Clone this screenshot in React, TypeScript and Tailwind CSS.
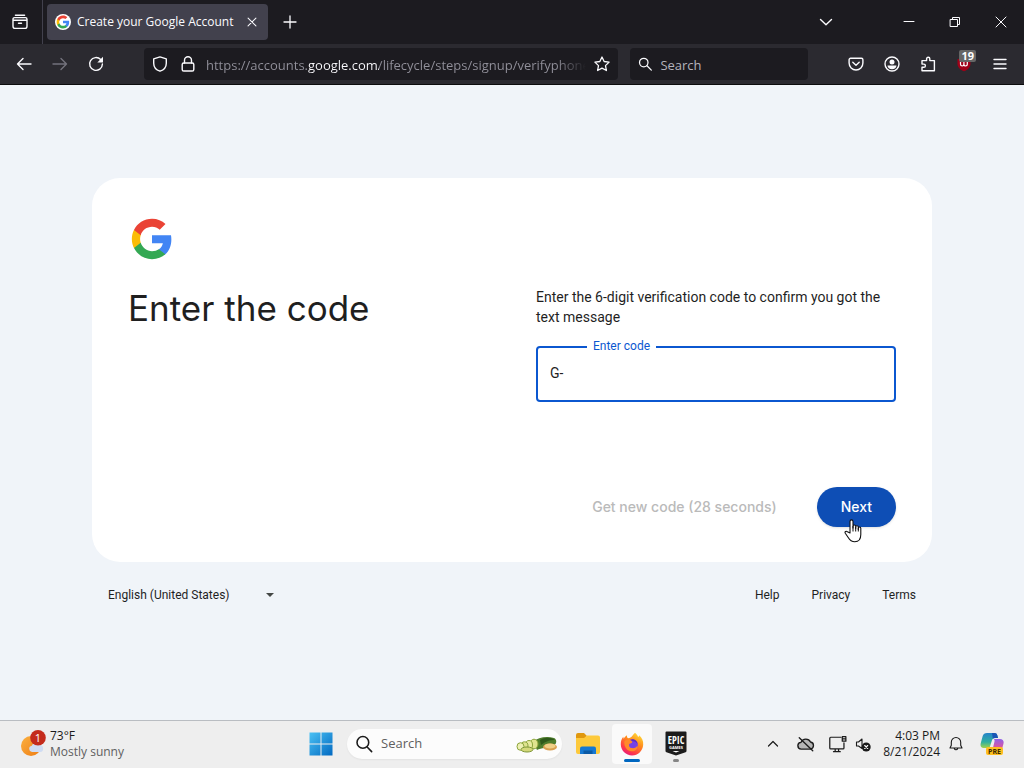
import type { ReactNode } from "react";

const CHROME_FONT = "font-['Open_Sans','Noto_Sans',sans-serif]";
const PAGE_FONT = "font-['Roboto','Inter',sans-serif]";
const DISPLAY_FONT = "font-['Inter','Roboto',sans-serif]";

function GoogleLogo({ className }: { className?: string }) {
  return (
    <svg viewBox="0 0 48 48" className={className} aria-hidden="true">
      <path fill="#4285F4" d="M45.12 24.5c0-1.56-.14-3.06-.4-4.5H24v8.51h11.84c-.51 2.75-2.06 5.08-4.39 6.64v5.52h7.11c4.16-3.83 6.56-9.47 6.56-16.17z" />
      <path fill="#34A853" d="M24 46c5.94 0 10.92-1.97 14.56-5.33l-7.11-5.52c-1.97 1.32-4.49 2.1-7.45 2.1-5.73 0-10.58-3.87-12.31-9.07H4.34v5.7C7.96 41.07 15.4 46 24 46z" />
      <path fill="#FBBC05" d="M11.69 28.18C11.25 26.86 11 25.45 11 24s.25-2.86.69-4.18v-5.7H4.34C2.85 17.09 2 20.45 2 24c0 3.55.85 6.91 2.34 9.88l7.35-5.7z" />
      <path fill="#EA4335" d="M24 10.75c3.23 0 6.13 1.11 8.41 3.29l6.31-6.31C34.91 4.18 29.93 2 24 2 15.4 2 7.96 6.93 4.34 14.12l7.35 5.7c1.73-5.2 6.58-9.07 12.31-9.07z" />
    </svg>
  );
}

function Glyph({ children, className = "size-4", width = 1.4 }: { children: ReactNode; className?: string; width?: number }) {
  return (
    <svg
      viewBox="0 0 16 16"
      className={className}
      fill="none"
      stroke="currentColor"
      strokeWidth={width}
      strokeLinecap="round"
      strokeLinejoin="round"
      aria-hidden="true"
    >
      {children}
    </svg>
  );
}

function ToolButton({ label, children, className = "text-[#fbfbfe]" }: { label: string; children: ReactNode; className?: string }) {
  return (
    <button type="button" aria-label={label} className={`flex h-8 w-9 shrink-0 items-center justify-center ${className}`}>
      {children}
    </button>
  );
}

function WindowButton({ label, children }: { label: string; children: ReactNode }) {
  return (
    <button type="button" aria-label={label} className="flex h-11 w-[46px] items-center justify-center text-[#fbfbfe]">
      {children}
    </button>
  );
}

function TabStrip() {
  return (
    <div className="flex h-11 items-center bg-[#1c1b20]">
      <div className="flex h-11 w-[43px] shrink-0 items-center justify-center border-r border-[#42414d] pr-0.5">
        <button type="button" aria-label="Recent browsing" className="text-[#fbfbfe]">
          <Glyph>
            <path d="M3.4 1.200h9.200M2.600 3.600h10.800a1.600 1.600 0 0 1 1.600 1.600v7a2.200 2.200 0 0 1-2.200 2.200H3.200A2.200 2.200 0 0 1 1 12.200v-7a1.600 1.600 0 0 1 1.600-1.600zM1.200 6.200h13.600M6.500 9.300h3" />
          </Glyph>
        </button>
      </div>
      <div className="ml-1 flex h-9 w-[221px] items-center rounded bg-[#42414d] px-2 text-[#fbfbfe]">
        <span className="flex size-4 shrink-0 items-center justify-center rounded-full bg-white">
          <GoogleLogo className="size-3.5" />
        </span>
        <span className="ml-1.5 grow truncate text-xs">Create your Google Account</span>
        <button type="button" aria-label="Close tab" className="flex size-4 items-center justify-center">
          <Glyph className="size-3.5" width={1.2}><path d="M3.500 3.500l9 9M12.500 3.500l-9 9" /></Glyph>
        </button>
      </div>
      <button type="button" aria-label="New tab" className="ml-1 flex size-9 items-center justify-center text-[#fbfbfe]">
        <Glyph width={1.3}><path d="M8 2v12M2 8h12" /></Glyph>
      </button>
      <div className="grow" />
      <button type="button" aria-label="List all tabs" className="mr-[42px] flex size-9 items-center justify-center text-[#fbfbfe]">
        <Glyph><path d="M2.500 5.500L8 10.700l5.500-5.200" /></Glyph>
      </button>
      <WindowButton label="Minimize">
        <Glyph width={1}><path d="M3 7.500h10" /></Glyph>
      </WindowButton>
      <WindowButton label="Restore">
        <Glyph width={1}><path strokeLinejoin="miter" d="M3.500 5.500h7v7h-7zM5.500 5.500v-2h7v7h-2" /></Glyph>
      </WindowButton>
      <WindowButton label="Close">
        <Glyph width={1}><path d="M3 3l10 10M13 3L3 13" /></Glyph>
      </WindowButton>
    </div>
  );
}

function NavBar() {
  return (
    <div className="flex h-[41px] items-center border-b border-[#0c0c0d] bg-[#2b2a30] px-1.5">
      <ToolButton label="Back">
        <Glyph><path d="M15 8H1.500M7 2.500L1.500 8 7 13.500" /></Glyph>
      </ToolButton>
      <ToolButton label="Forward" className="text-[#73727c]">
        <Glyph><path d="M1 8h13.500M9 2.500L14.500 8 9 13.500" /></Glyph>
      </ToolButton>
      <ToolButton label="Reload">
        <Glyph>
          <path d="M12.700 3.600A6.400 6.400 0 1 0 14.400 8" />
          <path fill="currentColor" stroke="none" d="M15 .8v5.200a.5.5 0 0 1-.5.5H9.300z" />
        </Glyph>
      </ToolButton>
      <div className="ml-[30px] flex h-8 min-w-0 grow items-center rounded bg-[#1c1b20] text-[#fbfbfe]">
        <button type="button" aria-label="Tracking protection" className="flex w-8 shrink-0 items-center justify-center">
          <Glyph>
            <path d="M8 .9l6.300 2v4.300c0 3.700-2.500 6.700-6.300 8-3.800-1.300-6.300-4.300-6.300-8V2.900z" />
          </Glyph>
        </button>
        <button type="button" aria-label="Site information" className="flex w-6 shrink-0 items-center justify-center">
          <Glyph>
            <rect x="2.200" y="7" width="11.600" height="8" rx="1.600" />
            <path d="M4.500 7V4.300a3.500 3.500 0 0 1 7 0V7" />
          </Glyph>
        </button>
        <input
          type="text"
          aria-label="Address"
          defaultValue="https://accounts.google.com/lifecycle/steps/signup/verifyphone"
          className="ml-1.5 h-8 min-w-0 grow bg-[linear-gradient(90deg,#92919b_102px,#fbfbfe_102px,#fbfbfe_173px,#92919b_173px,#92919b_350px,#1c1b20_380px)] bg-clip-text pt-0.5 text-[13px] text-transparent outline-none"
        />
        <button type="button" aria-label="Bookmark this page" className="flex w-8 shrink-0 items-center justify-center">
          <Glyph width={1.300}>
            <path d="M8 1l2.150 4.500 4.950.65-3.600 3.450.9 4.900L8 12.100l-4.400 2.400.9-4.900L.9 6.150l4.950-.65z" />
          </Glyph>
        </button>
      </div>
      <label className="ml-3 flex h-8 w-[178px] shrink-0 items-center rounded bg-[#1c1b20] pl-2 text-[#fbfbfe]">
        <Glyph>
          <circle cx="6.400" cy="6.400" r="4.700" />
          <path d="M10 10l4.800 4.800" />
        </Glyph>
        <input type="search" aria-label="Search" placeholder="Search" className="ml-2 h-8 min-w-0 grow bg-transparent pt-0.5 text-[13px] outline-none placeholder:text-[#b4b3bc]" />
      </label>
      <div className="ml-[30px] flex shrink-0">
        <ToolButton label="Save to Pocket">
          <Glyph>
            <path d="M2.600 2.200h10.800a1.500 1.500 0 0 1 1.500 1.500v3.400a6.900 6.900 0 0 1-13.800 0V3.700a1.500 1.500 0 0 1 1.500-1.500z" />
            <path d="M4.800 6.300L8 9.300l3.200-3" />
          </Glyph>
        </ToolButton>
        <ToolButton label="Account">
          <Glyph>
            <circle cx="8" cy="8" r="7" />
            <circle cx="8" cy="6" r="2.500" fill="currentColor" stroke="none" />
            <path fill="currentColor" stroke="none" d="M3.500 9.500h9c0 2.200-2 3.800-4.500 3.800s-4.500-1.600-4.500-3.800z" />
          </Glyph>
        </ToolButton>
        <ToolButton label="Extensions">
          <Glyph>
            <path d="M2 14.800V11.300h1.800a1.600 1.600 0 0 0 0-3.200H2V4.600h4.600V2.800a1.600 1.600 0 0 1 3.200 0v1.800h4.600v10.200z" />
          </Glyph>
        </ToolButton>
        <div className="relative">
          <ToolButton label="uBlock Origin">
            <svg viewBox="0 0 16 16" className="size-4" aria-hidden="true">
              <path fill="#a00018" d="M8 1l6.500 2.200v4.500c0 3.600-2.700 6-6.500 7.500-3.800-1.500-6.500-3.900-6.500-7.500V3.200z" />
              <path fill="none" stroke="#fff" strokeWidth="1.200" d="M4.500 6v2.300a1.700 1.700 0 0 0 3.400 0V6v2.300a1.700 1.700 0 0 0 3.400 0V6" />
            </svg>
          </ToolButton>
          <span className="absolute top-0.5 right-1.5 rounded-xs bg-[#666666] px-0.5 text-[11px] leading-3 font-bold text-white">19</span>
        </div>
        <ToolButton label="Open application menu">
          <Glyph><path d="M2 3.500h12M2 8h12M2 12.500h12" /></Glyph>
        </ToolButton>
      </div>
    </div>
  );
}

function HandPointer() {
  return (
    <svg viewBox="0 0 18 24" className="h-6 w-[18px]" aria-hidden="true">
      <path
        fill="#fff"
        stroke="#111"
        strokeWidth="1.100"
        strokeLinejoin="round"
        d="M6 14V2.400a1.500 1.500 0 0 1 3 0V9V7.300a1.300 1.300 0 0 1 2.700 0V9.500V8a1.300 1.300 0 0 1 2.600 0v2.500V9.300a1.250 1.250 0 0 1 2.500 0V15.500c0 4.500-2.300 7.300-6 7.300-3.500 0-5-1.600-6.600-4.300L1.300 14.300c-.9-1.600.9-2.700 2.100-1.500z"
      />
      <path stroke="#111" strokeWidth="1" d="M9 7v5.500M11.700 8v4.500M14.300 9v3.500" />
    </svg>
  );
}

function SignupCard() {
  return (
    <form className="rounded-[28px] bg-white px-9 pt-[37px] pb-[35px]" onSubmit={(e) => e.preventDefault()}>
      <div className="flex size-12 items-center justify-center">
        <GoogleLogo className="size-11" />
      </div>
      <div className="mt-6 grid grid-cols-2 gap-12">
        <h1 className={`text-[35px] leading-[42px] text-[#1f1f1f] ${DISPLAY_FONT}`}>Enter the code</h1>
        <div>
          <p className="text-sm text-[#1f1f1f]">
            Enter the 6-digit verification code to confirm you got the text message
          </p>
          <div className="relative mt-[19px]">
            <input
              id="code"
              type="text"
              defaultValue="G-"
              className="h-14 w-full rounded border-2 border-[#0b57d0] bg-white px-3 pb-0.5 text-sm text-[#1f1f1f] outline-none"
            />
            <label htmlFor="code" className="absolute -top-2 left-[51px] bg-white px-1.5 text-xs text-[#0b57d0]">
              Enter code
            </label>
          </div>
        </div>
      </div>
      <div className={`mt-[85px] flex items-center justify-end gap-10 ${DISPLAY_FONT}`}>
        <button type="button" disabled className="text-sm font-medium text-[#bababa]">
          Get new code (28 seconds)
        </button>
        <div className="relative">
          <button type="submit" className="h-10 rounded-full bg-[#0e4eb5] px-6 text-sm font-medium text-white shadow">
            Next
          </button>
          <span className="pointer-events-none absolute top-8 left-[27px]">
            <HandPointer />
          </span>
        </div>
      </div>
    </form>
  );
}

function AccountPage() {
  return (
    <main className={`grow bg-[#f0f4f9] px-4 pt-[93px] ${PAGE_FONT}`}>
      <div className="mx-auto max-w-[840px]">
        <SignupCard />
        <footer className="mt-2 flex h-[50px] items-center px-4 text-xs text-[#1f1f1f]">
          <div className="relative flex items-center">
            <select aria-label="Language" className="w-[170px] appearance-none bg-transparent outline-none">
              <option>English (United States)</option>
            </select>
            <svg viewBox="0 0 8 4" className="pointer-events-none absolute right-1 h-1 w-2" aria-hidden="true">
              <path fill="#444746" d="M0 0h8L4 4z" />
            </svg>
          </div>
          <nav className="ml-auto flex gap-8">
            <a href="#help">Help</a>
            <a href="#privacy">Privacy</a>
            <a href="#terms">Terms</a>
          </nav>
        </footer>
      </div>
    </main>
  );
}

function WeatherIcon() {
  return (
    <svg viewBox="0 0 26 28" className="h-7 w-[26px]" aria-hidden="true">
      <defs>
        <linearGradient id="sun" x1="0" y1="0" x2="1" y2="1">
          <stop offset="0" stopColor="#fbb040" />
          <stop offset="1" stopColor="#ee7d13" />
        </linearGradient>
      </defs>
      <circle cx="11" cy="16" r="10" fill="url(#sun)" />
      <path fill="#cfdcf3" d="M12 22a3.200 3.200 0 0 1-.3-6.300 4.200 4.200 0 0 1 7.600-.7 3.500 3.500 0 0 1 .7 7z" />
      <circle cx="18" cy="7.800" r="7.800" fill="#c42b1c" />
      <text x="18" y="12" fill="#fff" fontSize="11" textAnchor="middle">1</text>
    </svg>
  );
}

function WindowsIcon() {
  return (
    <svg viewBox="0 0 24 24" className="size-6" aria-hidden="true">
      <defs>
        <linearGradient id="win" x1="0" y1="0" x2="24" y2="24" gradientUnits="userSpaceOnUse">
          <stop offset="0" stopColor="#4cc3f5" />
          <stop offset="1" stopColor="#0067c0" />
        </linearGradient>
      </defs>
      <path fill="url(#win)" d="M.5 .5h11v11H.5zM12.500 .5h11v11h-11zM.5 12.500h11v11H.5zM12.500 12.500h11v11h-11z" />
    </svg>
  );
}

function ZucchiniArt() {
  return (
    <svg viewBox="0 0 42 18" className="h-[18px] w-[42px] shrink-0" aria-hidden="true">
      <path fill="#4f7d2c" d="M17 7C22 2 31 1 38 3c3 1 3 6 0 7-6 3-13 3-17 5z" />
      <path fill="#2f5a1b" d="M24 5c5-3 11-3 15 0-5 0-9 1-14 5z" />
      <g stroke="#8ba43a" strokeWidth="1">
        <ellipse cx="18" cy="9" rx="4" ry="4.800" fill="#dfe38f" />
        <ellipse cx="13" cy="10" rx="3.500" ry="4.500" fill="#e8eaa2" />
        <ellipse cx="8.500" cy="11" rx="3.500" ry="4.200" fill="#dfe38f" />
        <ellipse cx="4.500" cy="11.500" rx="3.500" ry="3.800" fill="#eef0b4" />
      </g>
      <ellipse cx="11" cy="14.500" rx="6" ry="2.500" fill="#d4d87a" stroke="#7d9637" />
      <ellipse cx="34" cy="12" rx="7" ry="3.500" fill="#d9a050" />
      <ellipse cx="34" cy="11" rx="5.500" ry="2.400" fill="#f0cf86" />
    </svg>
  );
}

function FolderIcon() {
  return (
    <svg viewBox="0 0 26 24" className="h-6 w-[26px]" aria-hidden="true">
      <path fill="#e0980f" d="M1 3a2 2 0 0 1 2-2h6l3 3h-1v5H1z" />
      <path fill="#fdc93b" d="M1 6h8l3-2.500h11A2 2 0 0 1 25 5.500V20a2 2 0 0 1-2 2H3a2 2 0 0 1-2-2z" />
      <path fill="#1678d2" d="M5 22v-5.500A2 2 0 0 1 7 14.500h12a2 2 0 0 1 2 2V22z" />
      <path fill="#0b5aa5" d="M8.500 18.500h9V22h-9z" />
    </svg>
  );
}

function FirefoxIcon() {
  return (
    <svg viewBox="0 0 24 24" className="size-6" aria-hidden="true">
      <defs>
        <linearGradient id="fox" x1=".8" y1="0" x2=".2" y2="1">
          <stop offset="0" stopColor="#ffe03a" />
          <stop offset=".4" stopColor="#ff8a1c" />
          <stop offset=".75" stopColor="#ff3b47" />
          <stop offset="1" stopColor="#e31587" />
        </linearGradient>
      </defs>
      <path fill="url(#fox)" d="M15 .8c1.500 1.300 2.600 2.700 3.100 4.200.8-.4 1-1.100 1-1.700C22 5.800 23.500 9 23.200 12.700 22.800 18.800 18 23.400 12 23.400S1 18.700.8 12.500C.7 9.500 1.500 6.800 3.200 4.700l.5 2c.8-1.500 1.900-2.800 3.300-3.500-.2 1.300.2 2.300 1 3 2.300 0 3-.8 4-1.900.8-1 1.800-2.300 3-3.500z" />
      <circle cx="12.300" cy="13" r="5.600" fill="#7542e5" />
      <path fill="#ff8a2a" d="M4.500 9c2.500-1.700 5.500-1.400 7.300.2.700.8.500 1.500-.3 1.800l-2.300.9c-.6 2 .3 3.800 2.600 4.200 2.500.4 4.700-.7 5.800-2.600.3 4.300-3.700 6.700-7.500 5.600C6 17.900 3.600 13.500 4.500 9z" />
      <path fill="#5b2cc4" d="M10 7.800c3.500-1.600 7.300.5 7.500 4.200-1-1.600-2.500-2.500-4.300-2.700z" />
    </svg>
  );
}

function EpicIcon() {
  return (
    <svg viewBox="0 0 22 25" className="h-[25px] w-[22px]" aria-hidden="true">
      <path fill="#1c1c1c" d="M.5 1.500a1 1 0 0 1 1-1h19a1 1 0 0 1 1 1v18.500c0 .7-.3 1.100-.9 1.300L11 24.500l-9.600-3.200c-.6-.2-.9-.6-.9-1.300z" />
      <text x="11" y="12.500" fill="#fff" fontSize="10" fontWeight="bold" textAnchor="middle" className="font-['Open_Sans_Condensed','Liberation_Sans_Narrow','Roboto_Condensed','Liberation_Sans',sans-serif]">EPIC</text>
      <text x="11" y="18" fill="#fff" fontSize="4" fontWeight="bold" textAnchor="middle">GAMES</text>
      <path fill="#fff" d="M7.500 20h7L11 21.500z" />
    </svg>
  );
}

function CopilotIcon() {
  return (
    <svg viewBox="0 0 24 24" className="size-6" aria-hidden="true">
      <defs>
        <linearGradient id="cpA" x1="0" y1="0" x2="0" y2="1">
          <stop offset="0" stopColor="#2583c9" />
          <stop offset=".6" stopColor="#2fb0a0" />
          <stop offset="1" stopColor="#a3d24a" />
        </linearGradient>
        <linearGradient id="cpB" x1="0" y1="0" x2="0" y2="1">
          <stop offset="0" stopColor="#8f62e8" />
          <stop offset=".6" stopColor="#e0569c" />
          <stop offset="1" stopColor="#f9a03f" />
        </linearGradient>
      </defs>
      <path fill="url(#cpA)" d="M7 1h7.500c1.500 0 2.300.8 2.800 2.200L18 6h-3c-1.800 0-2.600.9-3.100 2.500L9.500 16H4.500C1 16 0 14 .8 11l1.900-7C3.300 2 4.800 1 7 1z" />
      <path fill="#1b56b5" d="M12 1h2.500c1.500 0 2.300.8 2.800 2.200L18 6h-3c-1 0-1.700.3-2.200.8z" />
      <path fill="url(#cpB)" d="M15 7h5c3 0 4.200 2 3.400 5l-1.800 6.500c-.6 2.200-2 3.500-4.300 3.500H9c2 0 2.700-1.200 3.200-3l2.200-9c.2-.8.300-2-.4-3z" />
      <rect x="6" y="15" width="17" height="8" rx="2" fill="#ffbf1f" />
      <text x="14.500" y="21.600" fill="#3a2a00" fontSize="7" fontWeight="bold" textAnchor="middle">PRE</text>
    </svg>
  );
}

function Taskbar() {
  return (
    <footer className="flex h-12 items-center border-t border-[#b9bdc2] bg-[#eeeeee] pb-0.5 text-xs text-[#1b1b1b]">
      <div className="flex flex-1 pl-5">
        <button type="button" className="flex items-center gap-1 text-left">
          <WeatherIcon />
          <span>
            <span className="block">73°F</span>
            <span className="block text-[#5f5f5f]">Mostly sunny</span>
          </span>
        </button>
      </div>
      <div className="flex items-center pr-[27px]">
        <button type="button" aria-label="Start" className="flex size-10 items-center justify-center">
          <WindowsIcon />
        </button>
        <label className="ml-1.5 flex h-[30px] w-[215px] items-center rounded-full bg-[#fcfcfc] pr-1 pl-2 shadow-xs">
          <Glyph className="size-[18px] shrink-0">
            <circle cx="7" cy="6.600" r="5.200" />
            <path d="M10.800 10.600l4 4.200" />
          </Glyph>
          <input type="search" aria-label="Search Windows" placeholder="Search" className="ml-2 min-w-0 grow bg-transparent text-[13px] outline-none placeholder:text-[#5f5f5f]" />
          <ZucchiniArt />
        </label>
        <button type="button" aria-label="File Explorer" className="ml-1.5 flex size-10 items-center justify-center">
          <FolderIcon />
        </button>
        <button type="button" aria-label="Firefox" className="relative ml-1 flex size-10 items-center justify-center rounded bg-[#fafafa]">
          <FirefoxIcon />
          <span className="absolute bottom-0.5 h-[3px] w-4 rounded-full bg-[#0067c0]" />
        </button>
        <button type="button" aria-label="Epic Games Launcher" className="relative ml-1 flex size-10 items-center justify-center">
          <EpicIcon />
          <span className="absolute bottom-0.5 h-[3px] w-1.5 rounded-full bg-[#858585]" />
        </button>
      </div>
      <div className="flex flex-1 items-center justify-end pr-5">
        <button type="button" aria-label="Show hidden icons" className="mr-4">
          <Glyph width={1.200}><path d="M3.500 10L8 5.500l4.500 4.500" /></Glyph>
        </button>
        <button type="button" aria-label="OneDrive" className="mr-3.5">
          <Glyph className="size-[18px]" width={1.200}>
            <path fill="#b5b5b5" d="M4 12.500a3 3 0 0 1-.4-6A4.600 4.600 0 0 1 12 6.200a3.200 3.200 0 0 1 0 6.300z" />
            <path d="M2 2.500l12 11.500" />
          </Glyph>
        </button>
        <button type="button" aria-label="Network" className="mr-2">
          <Glyph className="size-[18px]" width={1.100}>
            <path d="M10.500 2H1.500a.8.8 0 0 0-.8.8v8.700a.8.800 0 0 0 .8.800h11a.8.800 0 0 0 .8-.8V7M4 14.800h6M5.500 12.300v2.500M8.500 12.300v2.500M11.800 1.500h3.200v4h-3.200zM11.800 3.500H15" />
          </Glyph>
        </button>
        <button type="button" aria-label="Volume muted" className="mr-3">
          <Glyph width={1.100}>
            <path d="M1.500 6h2L7 3v9.500L3.500 10h-2z" />
            <circle cx="11.200" cy="11" r="4.500" fill="currentColor" stroke="none" />
            <path stroke="#fff" d="M9.700 9.500l3 3M12.700 9.500l-3 3" />
          </Glyph>
        </button>
        <button type="button" className="text-right">
          <span className="block">4:03 PM</span>
          <span className="block">8/21/2024</span>
        </button>
        <button type="button" aria-label="Notifications" className="mr-4 ml-2">
          <Glyph width={1.100}>
            <path d="M8 1.500a4.700 4.700 0 0 0-4.700 4.700v3L2 12h12l-1.300-2.800v-3A4.700 4.700 0 0 0 8 1.500zM6.300 12.500a1.800 1.800 0 0 0 3.400 0" />
          </Glyph>
        </button>
        <button type="button" aria-label="Copilot">
          <CopilotIcon />
        </button>
      </div>
    </footer>
  );
}

export default function App() {
  return (
    <div className={`flex min-h-screen flex-col ${CHROME_FONT}`}>
      <header>
        <TabStrip />
        <NavBar />
      </header>
      <AccountPage />
      <Taskbar />
    </div>
  );
}
